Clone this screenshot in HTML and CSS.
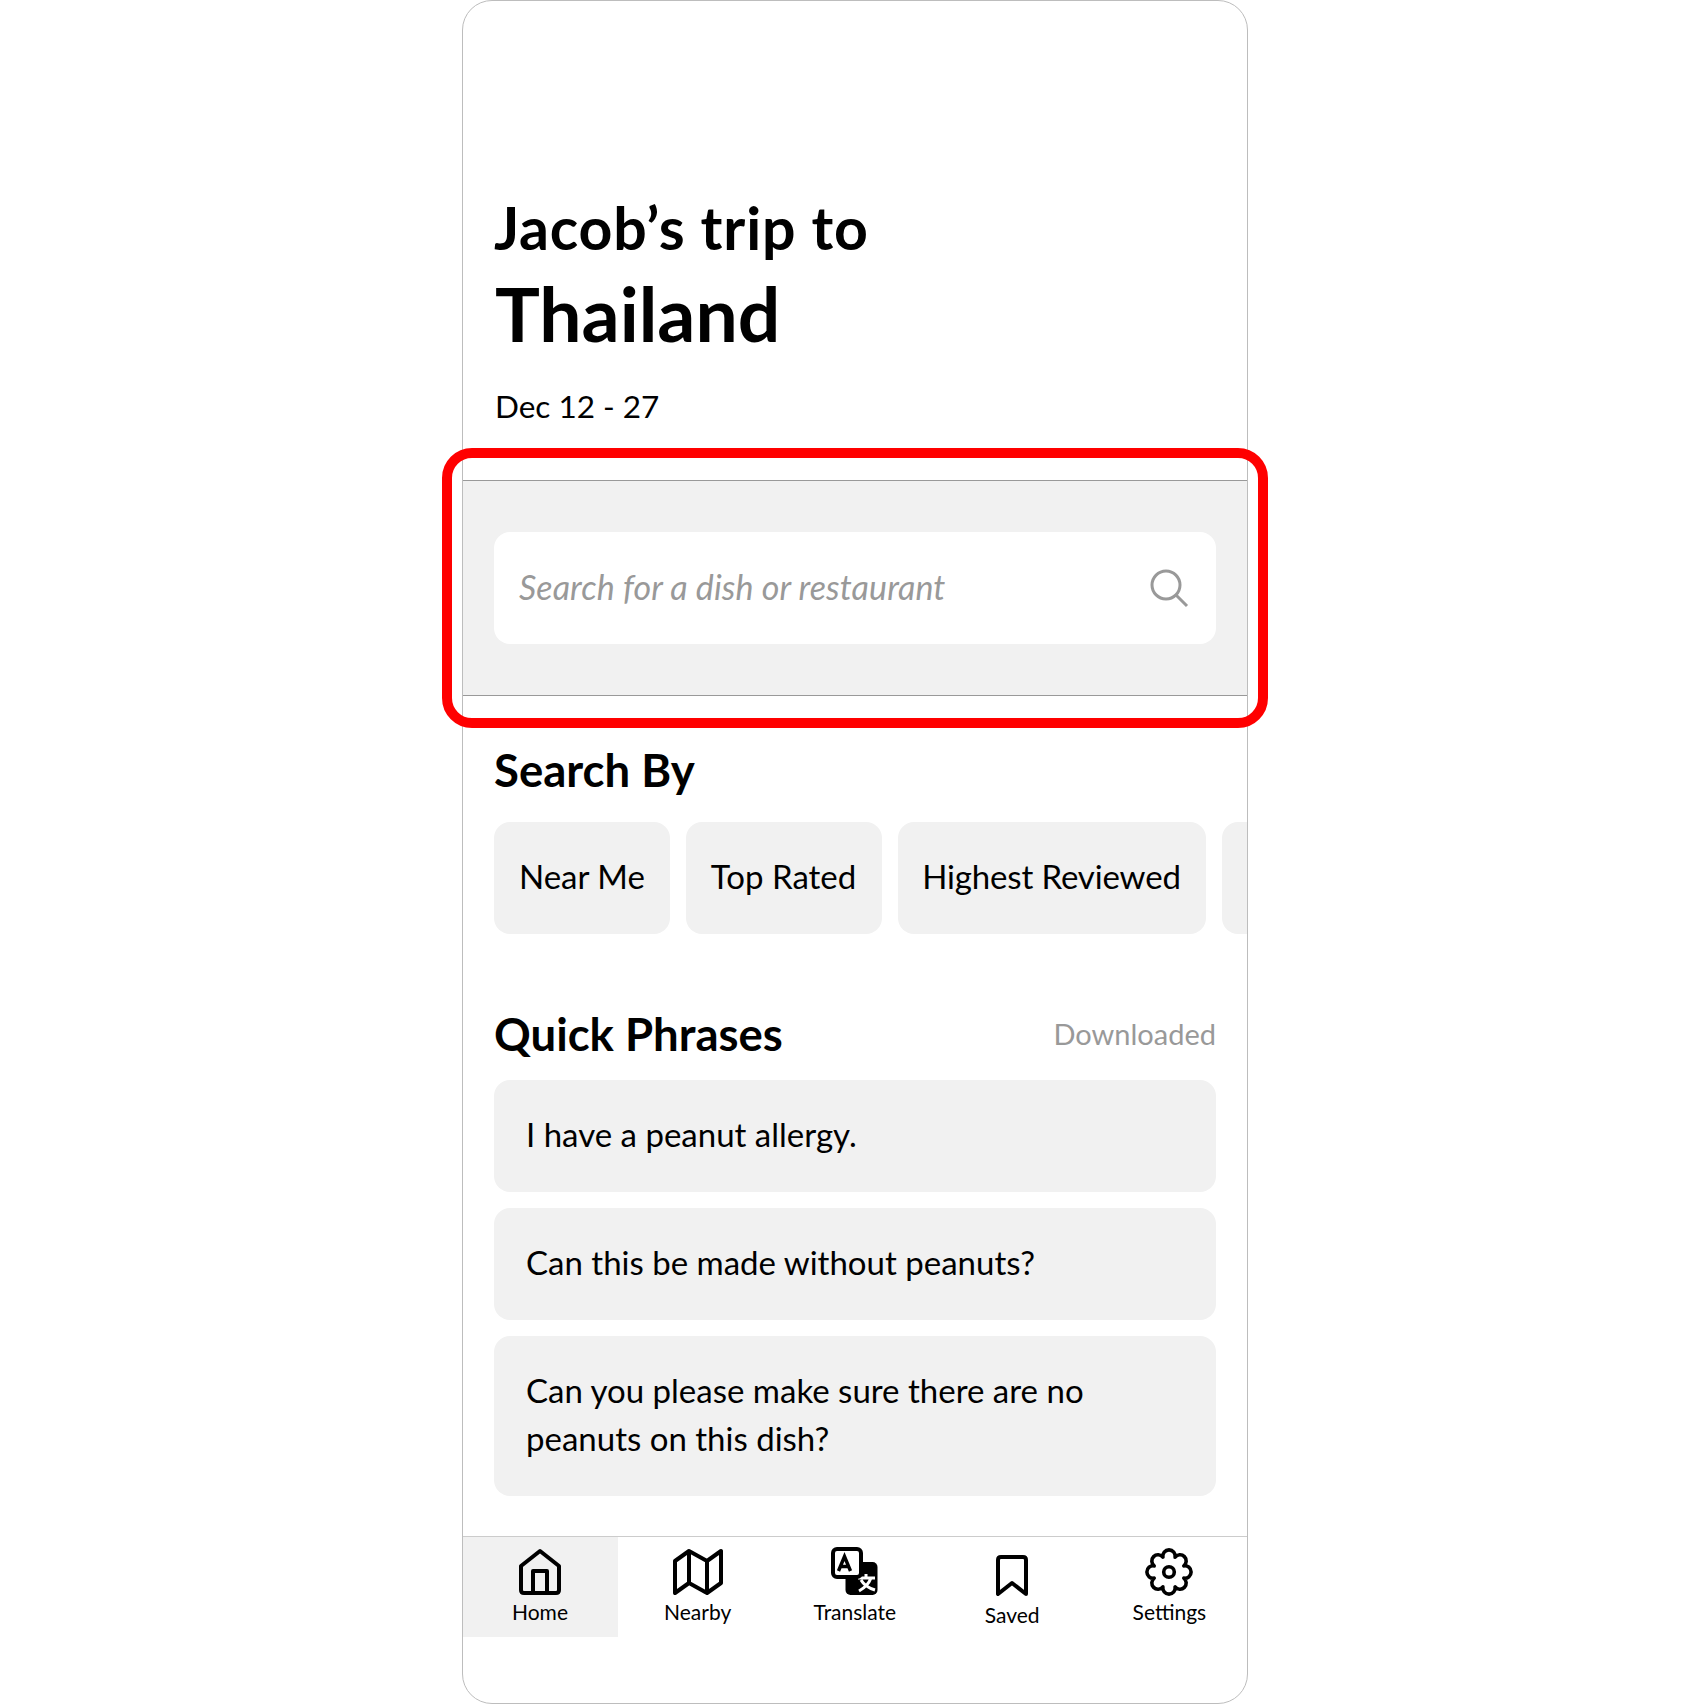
FILE: index.html
```html
<!DOCTYPE html>
<html lang="en">
<head>
    <meta charset="UTF-8">
    <title>Jacob's trip to Thailand</title>
    <link rel="stylesheet" href="styles.css">
</head>
<body>
    <div class="phone">
        <div class="trip-header">
            <h2 class="trip-owner">Jacob’s trip to</h2>
            <h1 class="trip-place">Thailand</h1>
            <p class="trip-dates">Dec 12 - 27</p>
        </div>

        <!-- Search band, the red box sits over it -->
        <div class="search-band">
            <div class="search-box">
                <span class="search-text">Search for a dish or restaurant</span>
                <svg class="search-icon" width="40" height="40" viewBox="0 0 40 40" fill="none" stroke="#999" stroke-width="3">
                    <circle cx="17" cy="17" r="14"/>
                    <path d="M27 27 L38 38"/>
                </svg>
            </div>
        </div>
        <div class="highlight"></div>

        <div class="section search-by">
            <h3 class="section-title">Search By</h3>
            <div class="chips">
                <div class="chip">Near Me</div>
                <div class="chip">Top Rated</div>
                <div class="chip chip-wide">Highest Reviewed</div>
                <div class="chip chip-cut"></div>
            </div>
        </div>

        <div class="section phrases">
            <div class="phrases-head">
                <h3 class="section-title">Quick Phrases</h3>
                <span class="downloaded">Downloaded</span>
            </div>
            <div class="phrase">I have a peanut allergy.</div>
            <div class="phrase">Can this be made without peanuts?</div>
            <div class="phrase phrase-long">Can you please make sure there are no<br>peanuts on this dish?</div>
        </div>

        <div class="bottom-nav">
            <div class="nav-item active">
                <svg width="44" height="48" viewBox="0 0 44 48" fill="none" stroke="#000" stroke-width="4" stroke-linejoin="round">
                    <path d="M22 3 L41 18 V42 Q41 45 38 45 H6 Q3 45 3 42 V18 Z"/>
                    <path d="M15 45 V23 H29 V45"/>
                </svg>
                <span>Home</span>
            </div>
            <div class="nav-item">
                <svg width="52" height="48" viewBox="0 0 52 48" fill="none" stroke="#000" stroke-width="4" stroke-linejoin="round">
                    <path d="M3 13 L17 3 L35 13 L49 3 V35 L35 45 L17 35 L3 45 Z"/>
                    <path d="M17 3 V35 M35 13 V45"/>
                </svg>
                <span>Nearby</span>
            </div>
            <div class="nav-item">
                <svg width="50" height="50" viewBox="0 0 50 50" fill="none">
                    <rect x="15.5" y="15" width="32" height="33" rx="5" fill="#000"/>
                    <path d="M28 31 H45 M36 27 V31 M41 31 Q38 39 29 44 M31 33 Q35 40 45 43" stroke="#fff" stroke-width="3"/>
                    <rect x="3" y="2" width="28" height="28" rx="4" fill="#fff" stroke="#000" stroke-width="4"/>
                    <path d="M8.5 24 L14.5 9.5 L20.5 24 M10.8 19.5 H18.2" stroke="#000" stroke-width="3.4"/>
                </svg>
                <span>Translate</span>
            </div>
            <div class="nav-item nav-saved">
                <svg width="34" height="42" viewBox="0 0 34 42" fill="none" stroke="#000" stroke-width="4" stroke-linejoin="round">
                    <path d="M3 5 Q3 2 6 2 H28 Q31 2 31 5 V39 L17 28 L3 39 Z"/>
                </svg>
                <span>Saved</span>
            </div>
            <div class="nav-item">
                <svg width="50" height="50" viewBox="0 0 50 50" fill="none" stroke="#000" stroke-width="3.6" stroke-linejoin="round">
                    <circle cx="25" cy="25" r="5.3"/>
                    <path d="M39.8 18.9 A6.2 6.2 0 1 1 39.8 31.1 A6.2 6.2 0 1 1 31.1 39.8 A6.2 6.2 0 1 1 18.9 39.8 A6.2 6.2 0 1 1 10.2 31.1 A6.2 6.2 0 1 1 10.2 18.9 A6.2 6.2 0 1 1 18.9 10.2 A6.2 6.2 0 1 1 31.1 10.2 A6.2 6.2 0 1 1 39.8 18.9 Z"/>
                </svg>
                <span>Settings</span>
            </div>
        </div>
    </div>
</body>
</html>
```

FILE: styles.css
```css
* {
    box-sizing: border-box;
}

body {
    margin: 0;
    background-color: #fff;
    font-family: "Lato", "Open Sans", sans-serif;
    color: #000;
}

.phone {
    position: relative;
    width: 786px;
    height: 1704px;
    margin: 0 0 0 462px;
    background-color: #fff;
    border: 1px solid #bdbdbd;
    border-radius: 30px;
}

.trip-header {
    padding: 192px 31px 0 31px;
    height: 479px;
}

.trip-owner {
    margin: 0;
    font-size: 59px;
    line-height: 70px;
    font-weight: 700;
    letter-spacing: 0.8px;
}

.trip-place {
    margin: 5px 0 0 1px;
    font-size: 75px;
    line-height: 90px;
    font-weight: 700;
}

.trip-dates {
    margin: 28px 0 0 1px;
    font-size: 31.5px;
    line-height: 40px;
}

.search-band {
    height: 216px;
    padding: 51px 31px 0 31px;
    background-color: #f1f1f1;
    border-top: 1px solid #999;
    border-bottom: 1px solid #999;
}

.search-box {
    display: flex;
    align-items: center;
    justify-content: space-between;
    height: 112px;
    padding: 0 27px 0 25px;
    background-color: #fff;
    border-radius: 16px;
}

.search-text {
    margin-bottom: 4px;
    font-size: 34px;
    font-style: italic;
    letter-spacing: 0.1px;
    color: #999;
}

.search-icon {
    flex-shrink: 0;
}

/* Red box drawn on top of the screenshot */
.highlight {
    position: absolute;
    top: 447px;
    left: -21px;
    width: 826px;
    height: 280px;
    border: 10px solid #f00;
    border-radius: 30px;
}

.section {
    padding-left: 31px;
}

.search-by {
    padding-top: 44px;
}

.section-title {
    margin: 0;
    font-size: 45.5px;
    line-height: 60px;
    font-weight: 700;
}

.chips {
    display: flex;
    gap: 16px;
    margin-top: 22px;
    overflow: hidden;
}

.chip {
    display: flex;
    align-items: center;
    flex-shrink: 0;
    height: 112px;
    padding: 0 26px 4px 25px;
    background-color: #f1f1f1;
    border-radius: 16px;
    font-size: 33px;
}

.chip:first-child {
    padding-right: 25px;
}

.chip-wide {
    padding: 0 25px 4px 24px;
    letter-spacing: -0.15px;
}

.chip-cut {
    width: 60px;
}

.phrases {
    padding-top: 70px;
    padding-right: 31px;
}

.phrases-head {
    display: flex;
    align-items: center;
    justify-content: space-between;
    margin-bottom: 16px;
}

.downloaded {
    margin-bottom: 2px;
    font-size: 29px;
    color: #999;
}

.phrase {
    display: flex;
    align-items: center;
    height: 112px;
    margin-bottom: 16px;
    padding: 0 32px 5px 32px;
    background-color: #f1f1f1;
    border-radius: 16px;
    font-size: 33px;
}

.phrase-long {
    height: 160px;
    line-height: 48px;
}

.bottom-nav {
    display: grid;
    grid-template-columns: 155px repeat(4, 1fr);
    margin-top: 40px;
    border-top: 1px solid #ccc;
}

.nav-item {
    display: flex;
    flex-direction: column;
    align-items: center;
    height: 100px;
    padding: 10px 0 0 2px;
    font-size: 21px;
}

.nav-item svg {
    display: block;
    height: 50px;
}

.nav-item span {
    margin-top: 2px;
}

.nav-item.active {
    padding: 10px 1px 0 0;
    background-color: #f1f1f1;
}

.nav-saved {
    padding-top: 18px;
}

.nav-saved svg {
    height: 42px;
}

.nav-saved span {
    margin-top: 5px;
}
```
